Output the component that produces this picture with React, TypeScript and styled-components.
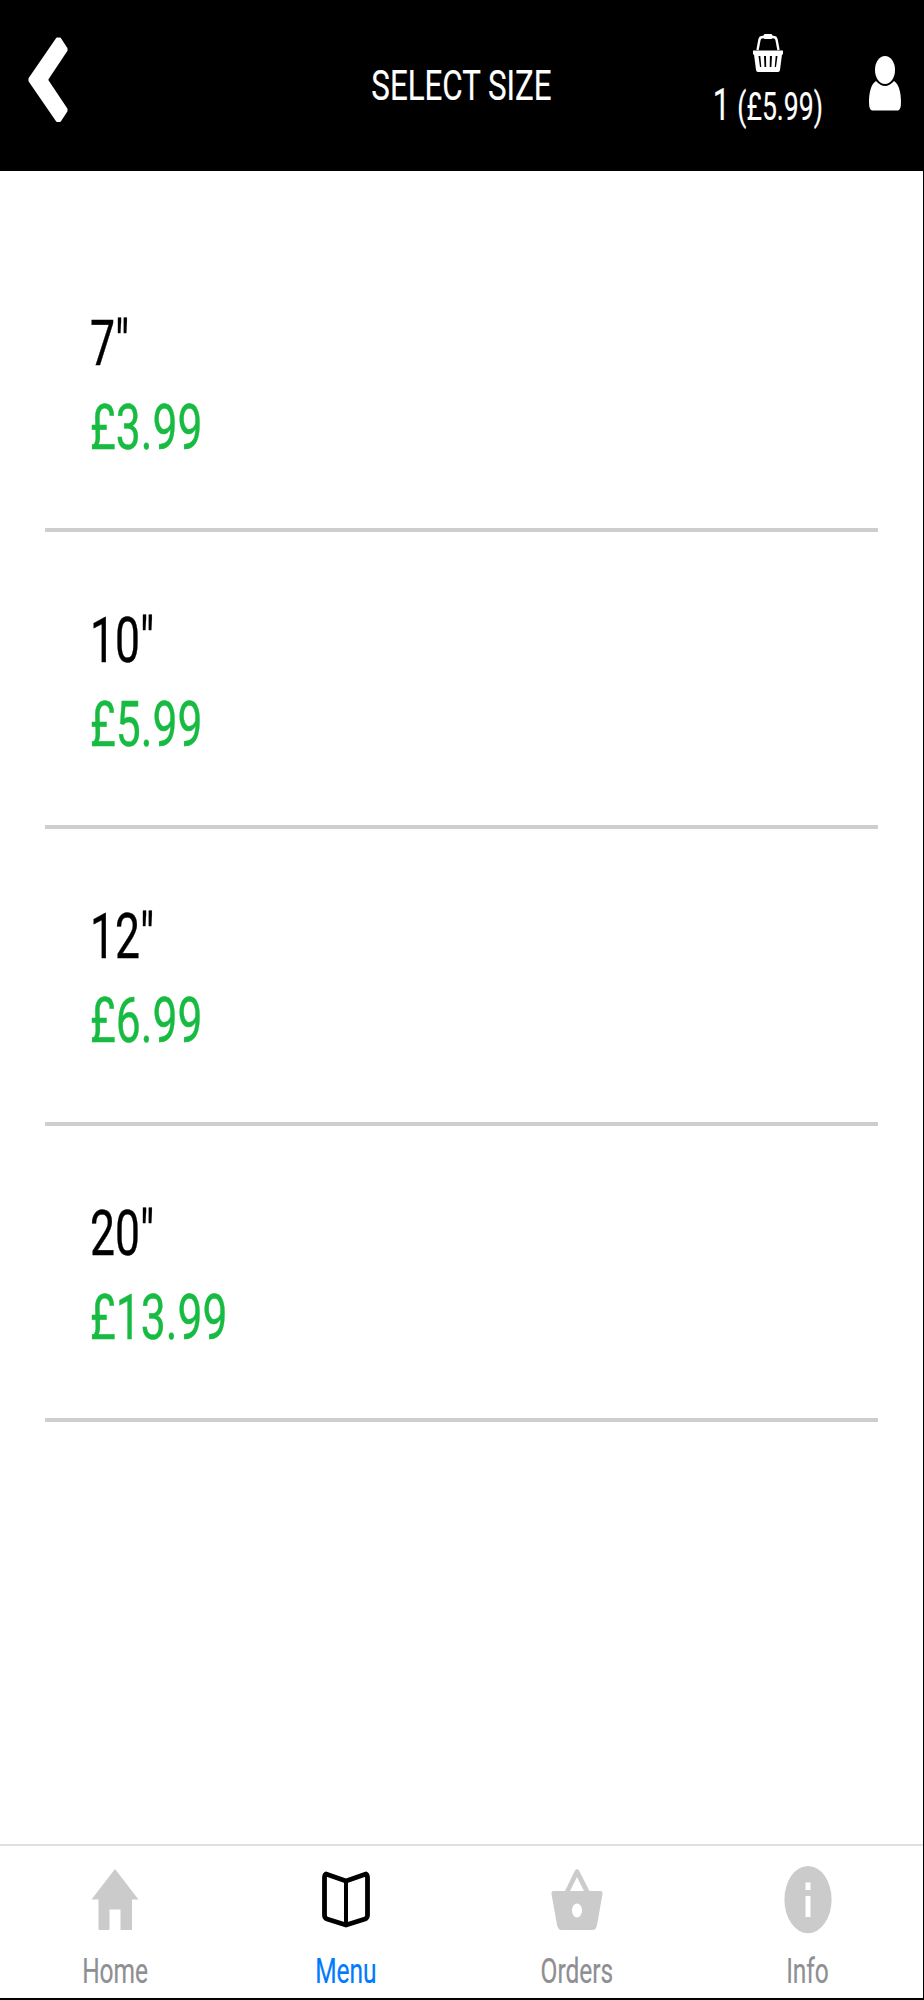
import React from "react";
import styled, { createGlobalStyle } from "styled-components";

const GlobalStyle = createGlobalStyle`
  * { box-sizing: border-box; }
  html, body { margin: 0; padding: 0; background: #000; }
  body { font-family: Roboto, "Liberation Sans", sans-serif; }
`;

const Screen = styled.div`
  width: 924px;
  height: 2000px;
  display: flex;
  flex-direction: column;
  background: #000;
  overflow: hidden;
`;

const Header = styled.header`
  flex: none;
  height: 171px;
  display: grid;
  grid-template-columns: 280px 1fr 280px;
  background: #000;
  color: #fff;
`;

const BackButton = styled.button`
  width: 100px;
  height: 160px;
  padding: 36px 0 0 28px;
  border: 0;
  background: none;
  display: flex;
  align-items: flex-start;
`;

const Title = styled.h1`
  margin: 0;
  padding: 61px 1px 0 0;
  font-size: 42.5px;
  line-height: 50px;
  font-weight: 400;
  display: flex;
  justify-content: center;
`;

const HeaderActions = styled.div`
  display: flex;
  justify-content: flex-end;
  padding-right: 22px;
`;

const BasketButton = styled.div`
  width: 140px;
  margin-right: 30px;
  padding-top: 33px;
  display: flex;
  flex-direction: column;
  align-items: center;
`;

const BasketSummary = styled.div`
  height: 50px;
  margin-top: 8px;
  display: flex;
  justify-content: center;
  align-items: baseline;
  font-size: 38px;
  line-height: 50px;
`;

const Count = styled.span`
  font-size: 43.5px;
`;

const ProfileButton = styled.div`
  padding-top: 56px;
`;

const Condensed = styled.span<{ $scale?: number; $origin?: string; $stroke?: number }>`
  display: inline-block;
  white-space: pre;
  transform: scaleX(${(p) => p.$scale ?? 0.7});
  transform-origin: ${(p) => p.$origin ?? "center"};
  -webkit-text-stroke: ${(p) => p.$stroke ?? 0.2}px currentColor;
`;

const Body = styled.div`
  flex: none;
  width: 923px;
  height: 1827px;
  display: flex;
  flex-direction: column;
  background: #fff;
`;

const SizeList = styled.ul`
  flex: 1;
  margin: 0;
  padding: 64.8px 45px 0;
  list-style: none;
`;

const SizeRow = styled.li`
  height: 296.6px;
  padding: 66.4px 0 0 45px;
  border-bottom: 4px solid #cecece;
  font-size: 63.5px;
  line-height: 84px;
`;

const SizeName = styled.div`
  height: 84px;
  color: #000;
`;

const Price = styled.div`
  height: 84px;
  color: #17bb41;
`;

const TabBar = styled.nav`
  flex: none;
  height: 154px;
  display: grid;
  grid-template-columns: repeat(4, 1fr);
  border-top: 2px solid #e0e0e0;
`;

const Tab = styled.div<{ $active?: boolean }>`
  display: flex;
  flex-direction: column;
  align-items: center;
  padding-top: 18px;
  color: ${(p) => (p.$active ? "#007aff" : "#8e8e93")};
  font-size: 35px;
  line-height: 42px;
`;

const TabIcon = styled.svg`
  display: block;
  width: 56px;
  height: 72px;
  margin-bottom: 15px;
`;

const sizes = [
  { name: '7"', price: "£3.99" },
  { name: '10"', price: "£5.99" },
  { name: '12"', price: "£6.99" },
  { name: '20"', price: "£13.99" },
];

const Chevron = () => (
  <svg width="41" height="88" viewBox="0 0 41 88">
    <path
      d="M29 2.5H32L38.5 12.5V14.5L19.5 43V44.5L38.5 73V75L32 85H29L1.5 45V42.5Z"
      fill="#fff"
      stroke="#fff"
      strokeWidth="2"
      strokeLinejoin="round"
    />
  </svg>
);

const BasketIcon = () => (
  <svg width="32" height="40" viewBox="0 0 32 40">
    <path d="M5.5 17L7.500 6.500Q8 4 11 4H21Q24 4 24.500 6.500L26.500 17" fill="none" stroke="#fff" strokeWidth="2.400" />
    <rect x="11.500" y="1" width="9" height="5" rx="1.500" fill="#fff" />
    <path
      fillRule="evenodd"
      fill="#fff"
      d="M1 17.500H31V21.500H30L28 37Q27.700 39 26 39H6Q4.300 39 4 37L2 21.500H1Z M6.500 23L8 34H9.300L8.300 23Z M12 23L12.500 34H14.200L14 23Z M17.900 23L17.700 34H19.400L20 23Z M23.700 23L22.700 34H24L25.500 23Z"
    />
  </svg>
);

const PersonIcon = () => (
  <svg width="34" height="56" viewBox="0 0 34 56">
    <ellipse cx="17" cy="14" rx="10" ry="14" fill="#fff" />
    <path d="M8 25Q17 35 26 25C31 28 33 37 33 46Q33 54 30 54.500H4Q1 54 1 46C1 37 3 28 8 25Z" fill="#fff" />
  </svg>
);

const HomeIcon = () => (
  <TabIcon viewBox="0 0 56 72">
    <path d="M28 5L51.500 35.500H45V66H33.500V45.500H22.500V66H11.500V35.500H4.500Z" fill="#cbcbcb" />
  </TabIcon>
);

const BookIcon = () => (
  <TabIcon viewBox="0 0 56 72">
    <g fill="none" stroke="#000" strokeLinejoin="round">
      <path d="M28 17L8 10Q6.500 11 6.500 14V51Q6.500 54 9 55L28 61L47 55Q49.500 54 49.500 51V14Q49.500 11 48 10Z" strokeWidth="4.800" />
      <path d="M28 16V60" strokeWidth="4" />
    </g>
  </TabIcon>
);

const OrdersIcon = () => (
  <TabIcon viewBox="0 0 56 72">
    <path
      fillRule="evenodd"
      fill="#cbcbcb"
      d="M16 27L26 6.500Q28 3.500 30 6.500L40.500 27H51.500Q53.800 27 53.500 30L48 61Q47.300 66 43.500 66H12.500Q9 66 8 61L2.500 30Q2.200 27 4.500 27Z M21 27H35L28 13Z M28 39.500A5 7 0 1 0 28 53.500A5 7 0 1 0 28 39.500Z"
    />
  </TabIcon>
);

const InfoIcon = () => (
  <TabIcon viewBox="0 0 56 72">
    <path
      fillRule="evenodd"
      fill="#cbcbcb"
      d="M28 2A23.600 33.600 0 1 0 28 69.200A23.600 33.600 0 1 0 28 2Z M25.500 18.500H30.500V26H25.500Z M25.500 32H30.500V53H25.500Z"
    />
  </TabIcon>
);

const tabs = [
  { label: "Home", icon: <HomeIcon /> },
  { label: "Menu", icon: <BookIcon />, active: true },
  { label: "Orders", icon: <OrdersIcon /> },
  { label: "Info", icon: <InfoIcon /> },
];

export default function App() {
  return (
    <Screen>
      <GlobalStyle />
      <Header>
        <BackButton aria-label="Back">
          <Chevron />
        </BackButton>
        <Title>
          <Condensed $scale={0.736}>SELECT SIZE</Condensed>
        </Title>
        <HeaderActions>
          <BasketButton>
            <BasketIcon />
            <BasketSummary>
              <Condensed $scale={0.7}>
                <Count>1 </Count>(£5.99)
              </Condensed>
            </BasketSummary>
          </BasketButton>
          <ProfileButton>
            <PersonIcon />
          </ProfileButton>
        </HeaderActions>
      </Header>
      <Body>
        <SizeList>
          {sizes.map((size) => (
            <SizeRow key={size.name}>
              <SizeName>
                <Condensed $origin="left" $stroke={0.4}>{size.name}</Condensed>
              </SizeName>
              <Price>
                <Condensed $origin="left" $stroke={0.4}>{size.price}</Condensed>
              </Price>
            </SizeRow>
          ))}
        </SizeList>
        <TabBar>
          {tabs.map((tab) => (
            <Tab key={tab.label} $active={tab.active}>
              {tab.icon}
              <Condensed>{tab.label}</Condensed>
            </Tab>
          ))}
        </TabBar>
      </Body>
    </Screen>
  );
}
